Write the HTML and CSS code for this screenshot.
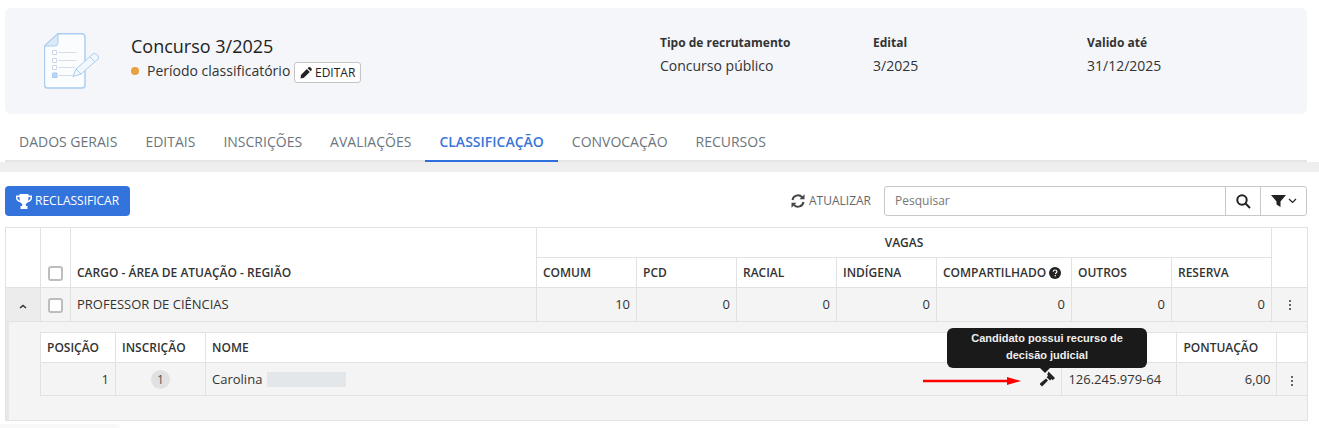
FILE: index.html
```html
<!DOCTYPE html>
<html lang="pt-BR">
<head>
<meta charset="utf-8">
<title>Concurso 3/2025</title>
<link rel="stylesheet" href="styles.css">
</head>
<body>
<section class="top">
  <header class="card">
    <svg class="doc" width="56" height="56" viewBox="0 0 56 56" fill="none" stroke="#a9ccef" stroke-width="1">
      <path d="M14 .800H38a3 3 0 0 1 3 3V52a3 3 0 0 1-3 3H3.500a3 3 0 0 1-3-3V13Z" fill="#fafcfe" stroke-width="1.400"/>
      <path d="M14 .800V9.500a3.500 3.500 0 0 1-3.500 3.500H.500Z" fill="#dce9f8"/>
      <path d="M8.500 17.500h4v4h-4zM8.500 25.500h4v4h-4zM8.500 32.500h4v4h-4z" stroke="#ccd7e3" fill="#fff"/>
      <path d="M8.500 40h4.500v4.500H8.500z" fill="#bcd6f1"/>
      <path d="M14.500 19.500h18M14.500 27.500h18M14.500 34.500h16M14.500 42.500h16" stroke="#d5dde6"/>
      <path d="M29 43.500l3-7.500 17-15c2.500-2 7 2.500 5 5L37 41Z" fill="#f2f7fd"/>
      <path d="M46 24l4.500 4.500M32 36l5 5"/>
    </svg>
    <div class="title-block">
      <h1>Concurso 3/2025</h1>
      <div class="status">
        <span class="dot"></span>
        <span>Período classificatório</span>
        <button class="edit">
          <svg width="13" height="13" viewBox="0 0 13 13" fill="#222"><path d="M8.800 1.200a1.200 1.200 0 0 1 1.700 0l1.300 1.300a1.200 1.200 0 0 1 0 1.700l-.9.900-3-3ZM7 3 10 6 4 12 .6 12.700 1 9Z"/></svg>EDITAR
        </button>
      </div>
    </div>
    <dl class="facts">
      <div class="fact f1"><dt>Tipo de recrutamento</dt><dd>Concurso público</dd></div>
      <div class="fact f2"><dt>Edital</dt><dd>3/2025</dd></div>
      <div class="fact f3"><dt>Valido até</dt><dd>31/12/2025</dd></div>
    </dl>
  </header>
  <nav class="tabs">
    <a>DADOS GERAIS</a><a>EDITAIS</a><a>INSCRIÇÕES</a><a>AVALIAÇÕES</a><a class="active">CLASSIFICAÇÃO</a><a>CONVOCAÇÃO</a><a>RECURSOS</a>
  </nav>
</section>
<div class="band"></div>
<main class="content">
  <div class="toolbar">
    <button class="primary">
      <svg width="16" height="15" viewBox="0 0 16 15" fill="#fff"><path d="M3.500 0h9v1.500H16V4c0 2.200-1.800 3.800-4.200 4.200-.5.800-1.200 1.400-2 1.700v2.100h1.700V15h-7v-3h1.700V9.900c-.8-.3-1.500-.9-2-1.700C1.800 7.800 0 6.200 0 4V1.500h3.500ZM1.500 3v1c0 1.200 1 2.200 2.400 2.600-.2-1-.4-2.200-.4-3.600Zm13 0h-2c0 1.400-.2 2.600-.4 3.600 1.400-.4 2.400-1.400 2.400-2.600Z"/></svg><span class="nudge">RECLASSIFICAR</span>
    </button>
    <a class="refresh">
      <svg width="14" height="14" viewBox="0 0 14 14" fill="none" stroke="#444" stroke-width="2"><path d="M1.500 6A5.500 5.500 0 0 1 11 3.200"/><path d="M12.500 8A5.500 5.500 0 0 1 3 10.800"/><path d="M13.500.3v5h-5z" fill="#444" stroke="none"/><path d="M.5 13.700v-5h5z" fill="#444" stroke="none"/></svg>ATUALIZAR
    </a>
    <div class="search">
      <span class="placeholder">Pesquisar</span>
      <span class="search-btn">
        <svg width="15" height="15" viewBox="0 0 15 15" fill="none" stroke="#222" stroke-width="2"><circle cx="6" cy="6" r="4.700"/><path d="M9.500 9.500l4.500 4.500"/></svg>
      </span>
      <span class="filter-btn">
        <svg width="15" height="12" viewBox="0 0 15 12" fill="#222"><path d="M0 0h15L9.500 6.500V12L5.500 9.500V6.500Z"/></svg>
        <svg width="9" height="6" viewBox="0 0 9 6" fill="none" stroke="#222" stroke-width="1.200"><path d="M1 1l3.500 3.500L8 1"/></svg>
      </span>
    </div>
  </div>
  <div class="table-wrap">
    <table class="outer">
      <colgroup>
        <col class="c35"><col class="c30"><col class="c466"><col class="c100"><col class="c100"><col class="c100"><col class="c100"><col class="c135"><col class="c100"><col class="c100"><col class="c36">
      </colgroup>
      <thead>
        <tr class="h30">
          <th rowspan="2"></th>
          <th rowspan="2" class="bottom boxcell"><span class="check"></span></th>
          <th rowspan="2" class="bottom">CARGO - ÁREA DE ATUAÇÃO - REGIÃO</th>
          <th colspan="7" class="center">VAGAS</th>
          <th rowspan="2"></th>
        </tr>
        <tr class="h30">
          <th>COMUM</th><th>PCD</th><th>RACIAL</th><th>INDÍGENA</th>
          <th>COMPARTILHADO <svg class="help" width="12" height="12" viewBox="0 0 12 12"><circle cx="6" cy="6" r="6" fill="#222"/><path d="M4.200 4.600C4.300 3.600 5 3 6 3s1.900.6 1.900 1.600c0 1.300-1.500 1.300-1.500 2.400" fill="none" stroke="#fff" stroke-width="1.200"/><circle cx="6.300" cy="8.800" r=".8" fill="#fff"/></svg></th>
          <th>OUTROS</th><th>RESERVA</th>
        </tr>
      </thead>
      <tbody>
        <tr class="row34">
          <td class="center expander">
            <svg width="8" height="5" viewBox="0 0 8 5" fill="none" stroke="#333" stroke-width="1.500"><path d="M1 4l3-2.600L7 4"/></svg>
          </td>
          <td class="boxcell"><span class="check"></span></td>
          <td>PROFESSOR DE CIÊNCIAS</td>
          <td class="num">10</td><td class="num">0</td><td class="num">0</td><td class="num">0</td><td class="num">0</td><td class="num">0</td><td class="num">0</td>
          <td class="center"><span class="kebab"><i></i><i></i><i></i></span></td>
        </tr>
        <tr>
          <td colspan="11" class="detail">
            <table class="inner">
              <colgroup>
                <col class="c75"><col class="c90"><col class="c856"><col class="c115"><col class="c100"><col class="c30">
              </colgroup>
              <thead>
                <tr class="h30"><th>POSIÇÃO</th><th>INSCRIÇÃO</th><th>NOME</th><th></th><th>PONTUAÇÃO</th><th></th></tr>
              </thead>
              <tbody>
                <tr class="row33">
                  <td class="num">1</td>
                  <td class="center"><span class="badge">1</span></td>
                  <td class="name-cell">
                    <div class="name-row">
                      <span>Carolina</span><span class="blur"></span>
                      <svg class="arrow" width="98" height="8" viewBox="0 0 98 8"><path d="M0 2.800h84V0l14 4-14 4V5.200H0Z" fill="#f00"/></svg>
                      <svg class="gavel" width="16" height="16" viewBox="0 0 16 16" fill="#222"><path d="M8.500.500l6.500 6.500-2.300 2.300-1.200-1.200-1.500 1.500-3.400-3.400 1.500-1.500-.9-.9ZM6 7.500l2 2-6 6-2.500-2.500Z"/></svg>
                    </div>
                  </td>
                  <td>126.245.979-64</td>
                  <td class="num">6,00</td>
                  <td class="center"><span class="kebab"><i></i><i></i><i></i></span></td>
                </tr>
              </tbody>
            </table>
          </td>
        </tr>
      </tbody>
    </table>
    <div class="tooltip">Candidato possui recurso de decisão judicial</div>
  </div>
</main>
<div class="corner-shadow"></div>
</body>
</html>
```

FILE: styles.css
```css
* { box-sizing: border-box; }
html, body { margin: 0; height: 428px; overflow: hidden; }
body { background: #fff; color: #333; font: 14px/20px "Open Sans", sans-serif; position: relative; }

.top { padding: 8px 12px 0 5px; height: 162px; }
.card { display: flex; align-items: center; height: 106px; background: #f4f6fa; border-radius: 6px; padding: 0 0 0 39px; }
.doc { flex: none; margin-right: 31px; margin-top: -1px; }
.title-block { width: 529px; margin-top: -5px; }
h1 { margin: 0; font-size: 18px; line-height: 24px; font-weight: 400; color: #222; }
.status { display: flex; align-items: center; gap: 4px; margin-top: 1px; color: #333; }
.dot { width: 8px; height: 8px; border-radius: 50%; background: #e8a13f; margin-right: 4px; }
.edit { display: inline-flex; align-items: center; gap: 2px; width: 67px; height: 21px; margin-top: 3px; padding: 0 5px; border: 1px solid #c4c4c4; border-radius: 3px; background: #fff; color: #222; font: 12px "Open Sans", sans-serif; }

.facts { display: flex; margin: -13px 0 0; }
.fact { margin: 0; }
.f1 { width: 213px; }
.f2 { width: 214px; }
dt { font-size: 12px; font-weight: 700; line-height: 18px; color: #333; margin-bottom: 4px; }
dd { margin: 0; line-height: 20px; color: #333; }

.tabs { display: flex; height: 37px; padding: 3px 0 0; border-bottom: 2px solid #e5e5e5; margin-top: 11px; }
.tabs a { padding: 0 14px; height: 32px; line-height: 28px; color: #6c757d; font-size: 14px; }
.tabs .active { color: #3b76d9; font-weight: 600; border-bottom: 2px solid #2f6fdb; height: 34px; }

.band { height: 10px; background: #eee; }

.content { padding: 14px 12px 0 5px; }
.toolbar { display: flex; align-items: center; height: 30px; }
.primary { display: inline-flex; align-items: center; gap: 3px; height: 30px; width: 125px; padding: 0 0 0 11px; background: #3374dc; color: #fff; border: 0; border-radius: 4px; font: 12px "Open Sans", sans-serif; }
.nudge { margin-top: -2px; }
.refresh { display: inline-flex; align-items: center; gap: 4px; margin-left: auto; color: #666; font-size: 12px; }
.search { display: flex; align-items: stretch; width: 423px; height: 30px; margin-left: 13px; border: 1px solid #c8c8c8; border-radius: 3px; }
.placeholder { flex: 1; padding-left: 10px; font-size: 12px; line-height: 28px; color: #777; }
.search-btn { width: 35px; display: flex; align-items: center; justify-content: center; border-left: 1px solid #c8c8c8; }
.filter-btn { width: 46px; display: flex; align-items: center; justify-content: center; gap: 2px; border-left: 1px solid #c8c8c8; padding-bottom: 1px; }

.table-wrap { position: relative; margin-top: 11px; }
table { border-collapse: collapse; table-layout: fixed; width: 100%; }
.outer { width: 1302px; }
th, td { border: 1px solid #e2e2e2; padding: 0 6px; font-size: 13px; }
th { font-size: 12px; font-weight: 600; color: #333; text-align: left; vertical-align: middle; }
thead th.bottom { vertical-align: bottom; padding-bottom: 4px; }
td { color: #333; }
.outer > tbody > tr > td { background: #f4f4f4; }
.outer > tbody > tr > td.expander { background: #ececec; }
.row34 td { padding-bottom: 2px; }
.center { text-align: center; }
th.center { text-align: center; }
.num { text-align: right; }
.h30 { height: 30px; }
.row34 { height: 34px; }
.row33 { height: 33px; }

.c35 { width: 35px; } .c30 { width: 30px; } .c466 { width: 466px; } .c100 { width: 100px; }
.c135 { width: 135px; } .c36 { width: 36px; } .c75 { width: 75px; } .c90 { width: 90px; }
.c856 { width: 856px; } .c115 { width: 115px; }

.boxcell { padding-left: 7px; padding-right: 0; }
.check { display: inline-block; width: 15px; height: 15px; border: 2px solid #bdbdbd; border-radius: 3px; background: #fff; vertical-align: middle; }
.kebab { display: inline-flex; flex-direction: column; gap: 2px; vertical-align: middle; }
.kebab i { width: 2px; height: 2px; background: #666; }
.help { vertical-align: -2px; }

td.detail { padding: 10px 0 24px 34px; box-shadow: inset 3px 0 0 #e8e8e8; }
.inner { width: 1267px; }
.inner th { background: #fff; }
.inner th:last-child, .inner td:last-child { border-right: 0; }
.badge { display: inline-block; width: 19px; height: 19px; line-height: 19px; border-radius: 50%; background: #e1e1e1; color: #555; font-size: 12px; }
.name-row { display: flex; align-items: center; }
.blur { width: 79px; height: 15px; margin-left: 5px; background: #e3e7ea; }
.arrow { margin-left: auto; margin-right: 19px; margin-top: 3px; }
.gavel { margin-right: -1px; }

.tooltip { position: absolute; left: 942px; top: 101px; width: 200px; height: 40px; padding: 2px 16px; background: #1a1a1a; border-radius: 6px; color: #f0f0f0; font: 700 11px/17px "Liberation Sans", Arial, sans-serif; text-align: center; }
.tooltip::after { content: ""; position: absolute; left: 93px; bottom: -5px; border: 5px solid transparent; border-top-color: #1a1a1a; border-bottom: 0; }

.corner-shadow { position: absolute; left: 0; bottom: 0; width: 120px; height: 4px; background: #f8f8f8; border-radius: 0 5px 0 0; }
```
